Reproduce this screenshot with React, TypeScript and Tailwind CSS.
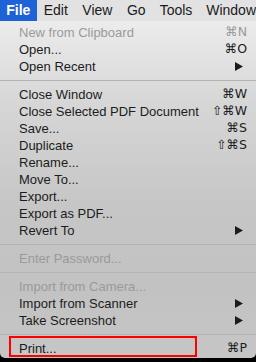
import React from "react";

type Item =
  | { kind: "sep" }
  | { kind: "item"; label: string; shortcut?: string; disabled?: boolean; arrow?: boolean };

const items: Item[] = [
  { kind: "item", label: "New from Clipboard", shortcut: "⌘N", disabled: true },
  { kind: "item", label: "Open...", shortcut: "⌘O" },
  { kind: "item", label: "Open Recent", arrow: true },
  { kind: "sep" },
  { kind: "item", label: "Close Window", shortcut: "⌘W" },
  { kind: "item", label: "Close Selected PDF Document", shortcut: "⇧⌘W" },
  { kind: "item", label: "Save...", shortcut: "⌘S" },
  { kind: "item", label: "Duplicate", shortcut: "⇧⌘S" },
  { kind: "item", label: "Rename..." },
  { kind: "item", label: "Move To..." },
  { kind: "item", label: "Export..." },
  { kind: "item", label: "Export as PDF..." },
  { kind: "item", label: "Revert To", arrow: true },
  { kind: "sep" },
  { kind: "item", label: "Enter Password...", disabled: true },
  { kind: "sep" },
  { kind: "item", label: "Import from Camera...", disabled: true },
  { kind: "item", label: "Import from Scanner", arrow: true },
  { kind: "item", label: "Take Screenshot", arrow: true },
  { kind: "sep" },
  { kind: "item", label: "Print...", shortcut: "⌘P" },
];

const font = { fontFamily: '"Liberation Sans", Arial, sans-serif' };

export default function App() {
  return (
    <div className="w-[256px] h-[362px] bg-black overflow-hidden relative" style={font}>
      <div className="h-[21px] bg-[#e2e2e2] flex items-center text-[14px] text-[#1a1a1a]">
        <div className="h-full w-[37px] bg-[#1d62d6] text-white font-bold flex items-center justify-center">File</div>
        <div className="pl-[7px] w-[46px]">Edit</div>
        <div className="w-[45px]">View</div>
        <div className="w-[33px]">Go</div>
        <div className="w-[47px]">Tools</div>
        <div>Window</div>
      </div>
      <div className="h-[337px] rounded-b-[5px] pt-[3px] bg-[linear-gradient(180deg,#ececec_0%,#d6d6d6_25%,#c6c6c6_55%,#c2c2c2_80%,#c6c6c6_100%)] text-[13px]">
        {items.map((it, i) =>
          it.kind === "sep" ? (
            <div key={i} className="h-[11px] flex items-center">
              <div className="h-px w-full bg-[#b4b4b4]" />
            </div>
          ) : (
            <div
              key={i}
              className={`h-[17px] flex items-center pl-[19px] pr-[9px] ${it.disabled ? "text-[#9a9a9a]" : "text-[#1c1c1c]"}`}
            >
              <span className="flex-1">{it.label}</span>
              {it.shortcut && (
                <span className="text-[12.5px]" style={{ fontFamily: '"DejaVu Sans", sans-serif' }}>
                  {it.shortcut}
                </span>
              )}
              {it.arrow && (
                <svg width="8" height="9" viewBox="0 0 8 9" className="mr-[4px]">
                  <path d="M0 0 L8 4.5 L0 9 Z" fill={it.disabled ? "#9a9a9a" : "#1c1c1c"} />
                </svg>
              )}
            </div>
          )
        )}
      </div>
      <div className="absolute left-[9px] top-[336px] w-[188px] h-[21px] border-2 border-[#ff0000]" />
    </div>
  );
}
